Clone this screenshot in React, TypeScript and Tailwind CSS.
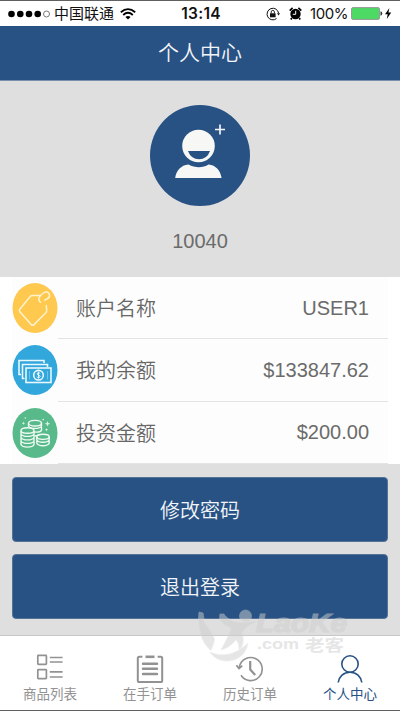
import type { ReactNode } from "react";

type Row = { label: string; value: string; icon: ReactNode };
type Tab = { label: string; active?: boolean; icon: ReactNode };

const TagIcon = () => (
  <svg className="w-[46px] h-[50px]" viewBox="0 0 46 50" fill="none">
    <ellipse cx="23" cy="25" rx="22.5" ry="25" fill="#ffc84e" />
    <g stroke="#fff3cf" strokeWidth="1.5" strokeLinecap="round" strokeLinejoin="round">
      <path d="M27.5 12.6H20.5Q19 12.6 18 13.8L7.8 26.2Q6.8 27.6 8 28.9L19.2 41.6Q20.6 43 22 41.6L33.8 29.8Q34.8 28.8 34.7 27.4L34.3 22.6" />
      <path d="M28.6 19.3C26 17.6 26.4 14.4 28.6 12.4L31.4 10C33.6 8.4 36.2 8.8 37.2 10.8C38.2 13 36.8 15 35 16L32.8 17.2" />
    </g>
  </svg>
);

const CashIcon = () => (
  <svg className="w-[46px] h-[50px]" viewBox="0 0 46 50" fill="none">
    <ellipse cx="23" cy="25" rx="22.5" ry="25" fill="#31a7dc" />
    <g stroke="#eaf8fe" strokeWidth="1.6">
      <path d="M9 29.5H7V15.5H32V18" />
      <path d="M12.5 33.5H10.5V19.5H35.5V22" />
      <rect x="14" y="23" width="25" height="14.5" />
      <circle cx="26.5" cy="30.2" r="4.8" />
      <path d="M28.2 28.4C27 27.2 24.9 27.8 25.1 29C25.3 30.5 28.2 29.9 28.1 31.4C28 32.8 25.8 33 24.8 31.9M26.5 26.8V33.6" strokeWidth="1" />
      <path d="M17.5 26V34.5M35.5 26V34.5" stroke="#7accec" strokeWidth="0.8" />
    </g>
  </svg>
);

const CoinsIcon = () => (
  <svg className="w-[46px] h-[50px]" viewBox="0 0 46 50" fill="none">
    <ellipse cx="23" cy="25" rx="22.5" ry="25" fill="#58ba8a" />
    <g stroke="#effaf4" strokeWidth="1.4">
      <ellipse cx="23" cy="15.2" rx="6.5" ry="2.8" />
      <path d="M16.5 15.5V18C18 21.2 28 21.2 29.5 18V15.5M22 24C25.5 24.4 29 23.5 29.5 22V19M22.5 28C24.5 28 26.5 27.5 28 26.5" />
      <ellipse cx="15.5" cy="22.5" rx="6.5" ry="2.8" />
      <path d="M9 23V26C10.5 29.2 20.5 29.2 22 26V23M9 26.5V29.5C10.5 32.7 20.5 32.7 22 29.5V26.5M9 30V33C10.5 36.2 20.5 36.2 22 33V30M9 33.5V36.5C10.5 40 20.5 40 22 36.5V33.5" />
      <ellipse cx="31" cy="28.8" rx="6.2" ry="2.6" />
      <path d="M24.8 29V32C26.3 35 35.7 35 37.2 32V29M24.8 32.8V35.3C26.3 38.5 35.7 38.5 37.2 35.3V32.8" />
    </g>
    <g fill="#d9f2e5">
      <path d="M35.5 13l.8 2 2 .8-2 .8-.8 2-.8-2-2-.8 2-.8zM11.5 13.5l.5 1.3 1.3.5-1.3.5-.5 1.3-.5-1.3-1.3-.5 1.3-.5zM34.5 20l.5 1.3 1.3.5-1.3.5-.5 1.3-.5-1.3-1.3-.5 1.3-.5z" />
      <circle cx="13.3" cy="10" r=".8" />
      <circle cx="31.2" cy="11.6" r=".8" />
    </g>
  </svg>
);

const rows: Row[] = [
  { label: "账户名称", value: "USER1", icon: <TagIcon /> },
  { label: "我的余额", value: "$133847.62", icon: <CashIcon /> },
  { label: "投资金额", value: "$200.00", icon: <CoinsIcon /> },
];

const tabs: Tab[] = [
  {
    label: "商品列表",
    icon: (
      <g strokeWidth="1.7">
        <rect x="2.8" y="1.3" width="8.6" height="9" rx="0.6" />
        <rect x="2.8" y="15.7" width="8.6" height="9" rx="0.6" />
        <path d="M14.8 3.5H27.6M14.8 8H27.6M14.8 17.9H27.6M14.8 23H27.6" />
      </g>
    ),
  },
  {
    label: "在手订单",
    icon: (
      <g strokeWidth="2">
        <path d="M7.4 2.8H4.4Q2.8 2.8 2.8 4.4V26.4Q2.8 28 4.4 28H25.6Q27.2 28 27.2 26.4V4.4Q27.2 2.8 25.6 2.8H22.6" />
        <path d="M10.5 2.8H19.5" strokeWidth="2.6" />
        <path d="M8 9.7H22M8 14.8H22M8 20H22" strokeWidth="2.4" strokeLinecap="round" />
      </g>
    ),
  },
  {
    label: "历史订单",
    icon: (
      <g strokeWidth="1.6">
        <path d="M4.4 13A11.5 11.5 0 1 1 6 21.3" />
        <path d="M1.4 11.2L4 14.4L7.2 11.8" strokeWidth="1.8" />
        <path d="M15.2 7V15.5L20.2 21" strokeWidth="2.2" />
      </g>
    ),
  },
  {
    label: "个人中心",
    active: true,
    icon: (
      <g strokeWidth="1.6">
        <circle cx="15" cy="10" r="8.2" />
        <path d="M3.2 28.5C4 22.5 8.5 18.2 15 18.2S26 22.5 26.8 28.5" />
      </g>
    ),
  },
];

function StatusBar() {
  return (
    <div className="flex h-[26px] shrink-0 items-center border-t border-[#606060] bg-white px-2 font-['Inter','Noto_Sans_CJK_SC',sans-serif] text-[#111]">
      <div className="flex w-[175px] items-center">
        <svg className="h-[8px] w-[43px]" viewBox="0 0 43 8">
          {[3.5, 12.3, 21, 29.7].map((cx) => (
            <circle key={cx} cx={cx} cy="4" r="3.3" fill="#000" />
          ))}
          <circle cx="38.5" cy="4" r="3" fill="none" stroke="#444" strokeWidth="0.7" />
        </svg>
        <span className="ml-[3px] text-[15px] leading-none">中国联通</span>
        <svg className="ml-[6px] h-[12px] w-[16px]" viewBox="0 0 16 12" fill="none" stroke="#000" strokeWidth="1.8">
          <path d="M.8 4.2Q8-2 15.2 4.2M3.2 7Q8 2.6 12.8 7" />
          <path d="M5.4 9Q8 6.8 10.6 9L8 11.6z" fill="#000" stroke="none" />
        </svg>
      </div>
      <span className="w-[40px] text-[15.5px] font-semibold leading-none tracking-[0.3px]">13:14</span>
      <div className="flex flex-1 items-center pl-[45px]">
        <svg className="h-[14px] w-[14px] shrink-0" viewBox="0 0 14 14" fill="none" stroke="#111">
          <path d="M12.6 6.2A5.8 5.8 0 1 0 10.6 11.5" strokeWidth="1" />
          <path d="M11 6.2H14L12.6 8.6z" fill="#111" stroke="none" />
          <rect x="4" y="6.3" width="5.6" height="4" fill="#111" stroke="none" />
          <path d="M5.2 6.5V5Q5.2 3.4 6.8 3.4T8.4 5V6.5" strokeWidth="0.9" />
        </svg>
        <svg className="ml-[9px] h-[13px] w-[13px] shrink-0" viewBox="0 0 13 13">
          <circle cx="6.5" cy="7" r="5.2" fill="#000" />
          <path d="M.7 3.6L3.6.9M9.4.9L12.3 3.6M2.8 11L1.8 12.5M10.2 11L11.2 12.5" stroke="#000" strokeWidth="1.7" />
          <path d="M6.7 3.8V7.3H3.8" fill="none" stroke="#fff" strokeWidth="1" />
        </svg>
        <span className="ml-[8px] w-[41px] text-[15px] leading-none tracking-[-0.4px]">100%</span>
        <svg className="h-[13px] w-[41px] shrink-0" viewBox="0 0 41 13">
          <rect x=".5" y=".6" width="28" height="11.8" rx="1.5" fill="#4cd964" stroke="#999" />
          <path d="M29.5 4.3Q31.3 4.8 31.3 6.5T29.5 8.7z" fill="#333" />
          <path d="M38.4 1L34 7.2H36.7L35.8 12L40.2 5.6H37.4z" fill="#000" />
        </svg>
      </div>
    </div>
  );
}

function Watermark() {
  return (
    <svg className="pointer-events-none absolute left-[196px] top-[608px] h-[54px] w-[156px]" viewBox="0 0 156 54">
      <g fill="#cecece" stroke="#dedede" strokeWidth="0.7" className="opacity-50">
        <path d="M3 4C1 19 5 35 15 42.5C17 37 18.5 34 18.5 31C16 24 13 20 9 16C7.5 12 8 8 7 5z" />
        <path d="M14 44C29 51 43 44 52 35C50 47 41 53 31 53C23 53 17 49 14 44z" />
        <circle cx="49.5" cy="8" r="6" />
        <path d="M24 6C22 13 28 18 35 20C33 28 28 36 25 42C33 40 37 35 40 32C43 35 43 39 43 42C48 38 48 30 46 25C50 18 56 16 62 13C55 13 47 15 41 14C36 13 30 10 28 6z" />
        <text
          x="60"
          y="23.5"
          textLength="91"
          lengthAdjust="spacingAndGlyphs"
          stroke="#cecece"
          strokeWidth="1.2"
          className="font-['Liberation_Sans'] text-[25px] font-bold italic"
        >
          LaoKe
        </text>
        <text x="61" y="41" stroke="none" textLength="42" lengthAdjust="spacingAndGlyphs" className="font-['Liberation_Sans'] text-[15px] font-bold">.com</text>
        <text x="109" y="43" stroke="none" textLength="39" lengthAdjust="spacingAndGlyphs" className="font-['Noto_Sans_CJK_SC'] text-[16px] font-bold">老客</text>
      </g>
    </svg>
  );
}

export default function App() {
  return (
    <div className="relative flex h-[711px] w-[400px] flex-col overflow-hidden bg-[#dfdfdf] font-['Liberation_Sans','Noto_Sans_CJK_SC',sans-serif] text-[#6b6b6b]">
      <StatusBar />
      <header className="flex h-[55px] shrink-0 items-center justify-center border-b border-[#7890ab] bg-[#285284] text-[21px] font-[350] text-[#f2f5f8]">
        个人中心
      </header>

      {/* Avatar */}
      <section className="flex h-[196px] shrink-0 flex-col items-center pt-6">
        <svg className="h-[101px] w-[100px]" viewBox="0 0 100 101">
          <ellipse cx="50" cy="50.5" rx="50" ry="50.5" fill="#285284" />
          <path d="M25.2 73C26 66 31 60 38.5 59.5C45 63 53 63 58.5 59.5C66 60 70.6 66 71.6 73z" fill="#f7f7f5" />
          <circle cx="48.5" cy="41.3" r="17.8" fill="#285284" />
          <circle cx="48.5" cy="41" r="16.3" fill="#f7f7f5" />
          <path d="M38 46H60Q57 54.2 49 54.2T38 46z" fill="#285284" />
          <path d="M70 19.5V29.5M65 24.5H75" stroke="#f4f4f4" strokeWidth="1.7" />
        </svg>
        <p className="mt-5 text-[20px] leading-[30px]">10040</p>
      </section>

      {/* Account info */}
      <section className="h-[187px] shrink-0 bg-white px-3">
        <div className="flex h-full flex-col bg-[#fdfdfd]">
          {rows.map((row) => (
            <div key={row.label} className="flex h-[62.4px] items-center">
              {row.icon}
              <div className="flex h-full flex-1 items-center justify-between border-b border-[#e4e4e4] pl-[18px] pr-[19px] text-[20px]">
                <span className="pt-[3px] font-[350] text-[#666]">{row.label}</span>
                <span>{row.value}</span>
              </div>
            </div>
          ))}
        </div>
      </section>

      <div className="flex h-[171px] shrink-0 flex-col gap-3 px-3 pt-[13px] text-[20px] font-[350] text-[#f2f5f8]">
        <button className="h-[65px] w-[376px] rounded-[4px] border border-[#547397] bg-[#285284] pt-0.5">修改密码</button>
        <button className="h-[65px] w-[376px] rounded-[4px] border border-[#547397] bg-[#285284] pt-0.5">退出登录</button>
      </div>

      <nav className="grid h-[76px] shrink-0 grid-cols-4 border-b border-t border-b-[#606060] border-t-[#c8c8c8] bg-white">
        {tabs.map((tab) => (
          <div
            key={tab.label}
            className={`flex flex-col items-center pt-[18px] text-[13.5px] ${
              tab.active ? "text-[#285284]" : "text-[#929292]"
            }`}
          >
            <svg className="h-[30px] w-[30px]" viewBox="0 0 30 30" fill="none" stroke="currentColor">
              {tab.icon}
            </svg>
            <span className="mt-px leading-[20px]">{tab.label}</span>
          </div>
        ))}
      </nav>

      <Watermark />
    </div>
  );
}
